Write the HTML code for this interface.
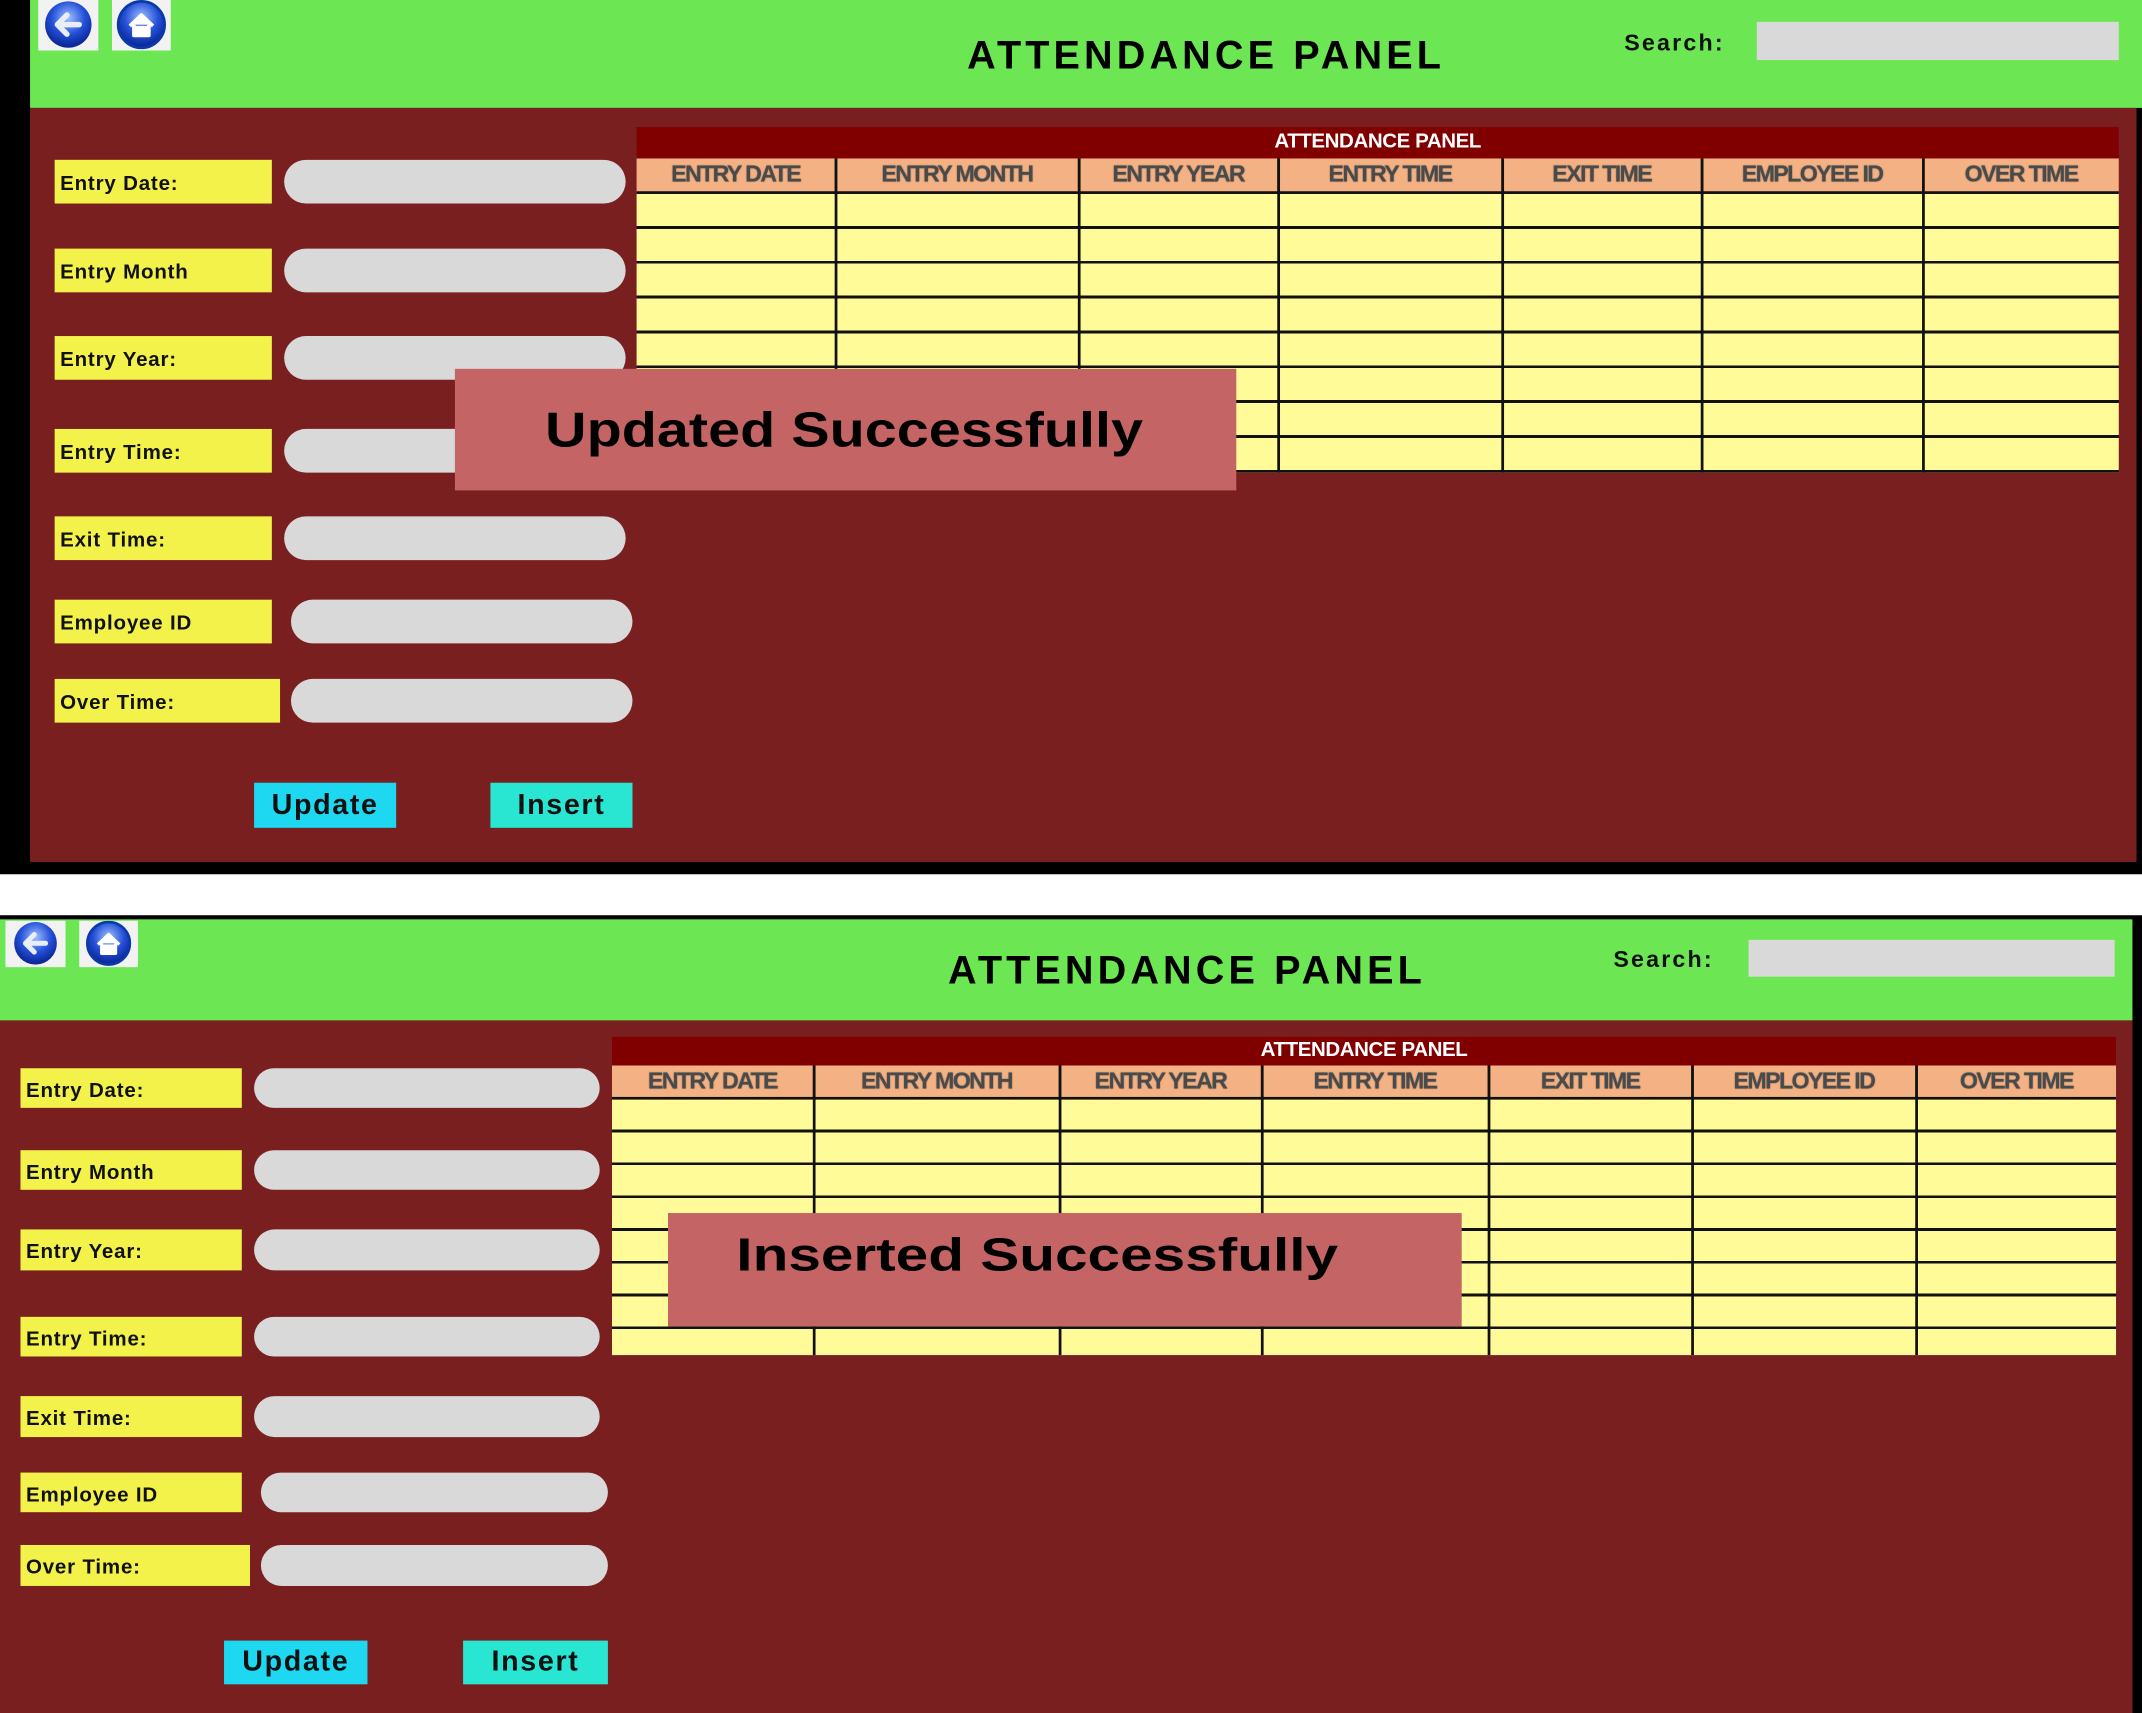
<!DOCTYPE html>
<html><head><meta charset="utf-8">
<style>
*{margin:0;padding:0;box-sizing:border-box}
html,body{width:2142px;height:1713px;overflow:hidden;background:#fff}
#w{position:absolute;left:0;top:0;width:1568px;height:1254px;transform:scale(1.36607,1.36603);transform-origin:0 0;font-family:"Liberation Sans",Arial,sans-serif}
.a{position:absolute}
.g{background:#6ce652}
.m{background:#7a1f20}
.lbl{position:absolute;background:#f2f24a;font-weight:bold;font-size:15px;letter-spacing:0.6px;color:#111;padding-left:4px;display:flex;align-items:center;padding-top:3px}
.inp{position:absolute;background:#d9d9d9;border-radius:16px}
.btn{position:absolute;font-weight:bold;font-size:21px;letter-spacing:1.2px;color:#111;display:flex;align-items:center;justify-content:center}
.ttl{position:absolute;font-weight:bold;font-size:29px;letter-spacing:3px;color:#000;white-space:nowrap}
.srch{position:absolute;font-weight:bold;font-size:17px;letter-spacing:1.6px;color:#111}
.sbox{position:absolute;background:#d9d9d9}
.tbar{position:absolute;background:#800000;color:#fff;font-size:15px;font-weight:bold;text-align:center;letter-spacing:-0.3px}
.hdr{position:absolute;background:#f4b183;display:flex;border-bottom:2px solid #111}
.hdr div{border-right:1.5px solid #222;color:#4a4a4a;font-weight:bold;font-size:17px;letter-spacing:-1.2px;text-align:center;white-space:nowrap;overflow:hidden;text-shadow:0 0 1px #555}
.hdr div:last-child{border-right:none}
.body{position:absolute}
.vl{position:absolute;width:1.5px;background:#111}
.toast{position:absolute;background:#c46464;font-weight:bold;color:#000;white-space:nowrap}
.toast span{display:inline-block;transform-origin:0 50%}
.ic{position:absolute;background:#f2f2f2}
</style></head><body>
<div id="w">
<!-- ================= TOP PANEL ================= -->
<div class="a" style="left:0;top:0;width:1568px;height:640px;background:#000"></div>
<div class="a g" style="left:22px;top:0;width:1546px;height:79px"></div>
<div class="a m" style="left:22px;top:79px;width:1542px;height:552px"></div>

<div class="ic" style="left:28px;top:0;width:44px;height:37px"><svg width="44" height="37" viewBox="0 0 44 37"><defs><radialGradient id="b1" cx="50%" cy="35%" r="60%"><stop offset="0" stop-color="#9fc0ff"/><stop offset=".6" stop-color="#2450d8"/><stop offset="1" stop-color="#0c2a9a"/></radialGradient></defs><circle cx="22" cy="18" r="17" fill="url(#b1)"/><path d="M30 18H16M21 11l-7 7 7 7" stroke="#e8eef8" stroke-width="4" fill="none" stroke-linecap="round" stroke-linejoin="round"/></svg></div>
<div class="ic" style="left:82px;top:0;width:43px;height:37px"><svg width="43" height="37" viewBox="0 0 43 37"><circle cx="21.5" cy="18" r="17" fill="url(#b1)" stroke="#0a3aa8" stroke-width="2"/><path d="M13 19l8.5-8 8.5 8M16 18v8h11v-8" stroke="#fff" stroke-width="2.6" fill="#fff" stroke-linejoin="round"/></svg></div>

<div class="ttl" style="left:708px;top:25px">ATTENDANCE PANEL</div>
<div class="srch" style="left:1189px;top:22px">Search:</div>
<div class="sbox" style="left:1286px;top:16px;width:265px;height:28px"></div>

<div class="lbl" style="left:40px;top:117px;width:159px;height:32px">Entry Date:</div>
<div class="lbl" style="left:40px;top:182px;width:159px;height:32px">Entry Month</div>
<div class="lbl" style="left:40px;top:246px;width:159px;height:32px">Entry Year:</div>
<div class="lbl" style="left:40px;top:314px;width:159px;height:32px">Entry Time:</div>
<div class="lbl" style="left:40px;top:378px;width:159px;height:32px">Exit Time:</div>
<div class="lbl" style="left:40px;top:439px;width:159px;height:32px">Employee ID</div>
<div class="lbl" style="left:40px;top:497px;width:165px;height:32px">Over Time:</div>

<div class="inp" style="left:208px;top:117px;width:250px;height:32px"></div>
<div class="inp" style="left:208px;top:182px;width:250px;height:32px"></div>
<div class="inp" style="left:208px;top:246px;width:250px;height:32px"></div>
<div class="inp" style="left:208px;top:314px;width:250px;height:32px"></div>
<div class="inp" style="left:208px;top:378px;width:250px;height:32px"></div>
<div class="inp" style="left:213px;top:439px;width:250px;height:32px"></div>
<div class="inp" style="left:213px;top:497px;width:250px;height:32px"></div>

<div class="btn" style="left:186px;top:573px;width:104px;height:33px;background:#1ed7f0">Update</div>
<div class="btn" style="left:359px;top:573px;width:104px;height:33px;background:#29e6d3">Insert</div>

<div class="tbar" style="left:466px;top:93px;width:1085px;height:23px;line-height:22px">ATTENDANCE PANEL</div>
<div class="hdr" style="left:466px;top:116px;width:1085px;height:26px;line-height:24px">
<div style="width:146px">ENTRY DATE</div><div style="width:178px">ENTRY MONTH</div><div style="width:146px">ENTRY YEAR</div><div style="width:164px">ENTRY TIME</div><div style="width:146px">EXIT TIME</div><div style="width:162px">EMPLOYEE ID</div><div style="width:143px">OVER TIME</div>
</div>
<div class="body" style="left:466px;top:142px;width:1085px;height:204px;background:repeating-linear-gradient(to bottom,#fffb98 0 23.5px,#111 23.5px 25.5px)"></div>
<div class="vl" style="left:611px;top:116px;height:230px"></div>
<div class="vl" style="left:789px;top:116px;height:230px"></div>
<div class="vl" style="left:935px;top:116px;height:230px"></div>
<div class="vl" style="left:1099px;top:116px;height:230px"></div>
<div class="vl" style="left:1245px;top:116px;height:230px"></div>
<div class="vl" style="left:1407px;top:116px;height:230px"></div>

<div class="toast" style="left:333px;top:270px;width:572px;height:89px;font-size:36px;padding:24px 0 0 66px"><span style="transform:scaleX(1.17)">Updated Successfully</span></div>

<!-- ================= BOTTOM PANEL ================= -->
<div class="a" style="left:0;top:670px;width:1568px;height:584px;background:#000"></div>
<div class="a g" style="left:0;top:673px;width:1561px;height:74px"></div>
<div class="a m" style="left:0;top:747px;width:1561px;height:507px"></div>

<div class="ic" style="left:4px;top:674px;width:44px;height:34px"><svg width="44" height="34" viewBox="0 0 44 37"><circle cx="22" cy="18" r="17" fill="url(#b1)"/><path d="M30 18H16M21 11l-7 7 7 7" stroke="#e8eef8" stroke-width="4" fill="none" stroke-linecap="round" stroke-linejoin="round"/></svg></div>
<div class="ic" style="left:58px;top:674px;width:43px;height:34px"><svg width="43" height="34" viewBox="0 0 43 37"><circle cx="21.5" cy="18" r="17" fill="url(#b1)" stroke="#0a3aa8" stroke-width="2"/><path d="M13 19l8.5-8 8.5 8M16 18v8h11v-8" stroke="#fff" stroke-width="2.6" fill="#fff" stroke-linejoin="round"/></svg></div>

<div class="ttl" style="left:694px;top:695px">ATTENDANCE PANEL</div>
<div class="srch" style="left:1181px;top:693px">Search:</div>
<div class="sbox" style="left:1280px;top:688px;width:268px;height:27px"></div>

<div class="lbl" style="left:15px;top:782px;width:162px;height:29px">Entry Date:</div>
<div class="lbl" style="left:15px;top:842px;width:162px;height:29px">Entry Month</div>
<div class="lbl" style="left:15px;top:900px;width:162px;height:30px">Entry Year:</div>
<div class="lbl" style="left:15px;top:964px;width:162px;height:29px">Entry Time:</div>
<div class="lbl" style="left:15px;top:1022px;width:162px;height:30px">Exit Time:</div>
<div class="lbl" style="left:15px;top:1078px;width:162px;height:29px">Employee ID</div>
<div class="lbl" style="left:15px;top:1131px;width:168px;height:30px">Over Time:</div>

<div class="inp" style="left:186px;top:782px;width:253px;height:29px;border-radius:15px"></div>
<div class="inp" style="left:186px;top:842px;width:253px;height:29px;border-radius:15px"></div>
<div class="inp" style="left:186px;top:900px;width:253px;height:30px;border-radius:15px"></div>
<div class="inp" style="left:186px;top:964px;width:253px;height:29px;border-radius:15px"></div>
<div class="inp" style="left:186px;top:1022px;width:253px;height:30px;border-radius:15px"></div>
<div class="inp" style="left:191px;top:1078px;width:254px;height:29px;border-radius:15px"></div>
<div class="inp" style="left:191px;top:1131px;width:254px;height:30px;border-radius:15px"></div>

<div class="btn" style="left:164px;top:1201px;width:105px;height:32px;background:#1ed7f0">Update</div>
<div class="btn" style="left:339px;top:1201px;width:106px;height:32px;background:#29e6d3">Insert</div>

<div class="tbar" style="left:448px;top:759px;width:1101px;height:21px;line-height:20px">ATTENDANCE PANEL</div>
<div class="hdr" style="left:448px;top:780px;width:1101px;height:25px;line-height:23px">
<div style="width:148px">ENTRY DATE</div><div style="width:180px">ENTRY MONTH</div><div style="width:148px">ENTRY YEAR</div><div style="width:166px">ENTRY TIME</div><div style="width:149px">EXIT TIME</div><div style="width:164px">EMPLOYEE ID</div><div style="width:146px">OVER TIME</div>
</div>
<div class="body" style="left:448px;top:805px;width:1101px;height:187px;background:repeating-linear-gradient(to bottom,#fffb98 0 22px,#111 22px 24px)"></div>
<div class="vl" style="left:595px;top:780px;height:212px"></div>
<div class="vl" style="left:775px;top:780px;height:212px"></div>
<div class="vl" style="left:923px;top:780px;height:212px"></div>
<div class="vl" style="left:1089px;top:780px;height:212px"></div>
<div class="vl" style="left:1238px;top:780px;height:212px"></div>
<div class="vl" style="left:1402px;top:780px;height:212px"></div>

<div class="toast" style="left:489px;top:888px;width:581px;height:83px;font-size:34px;padding:12px 0 0 50px"><span style="transform:scaleX(1.26)">Inserted Successfully</span></div>
</div>
</body></html>
